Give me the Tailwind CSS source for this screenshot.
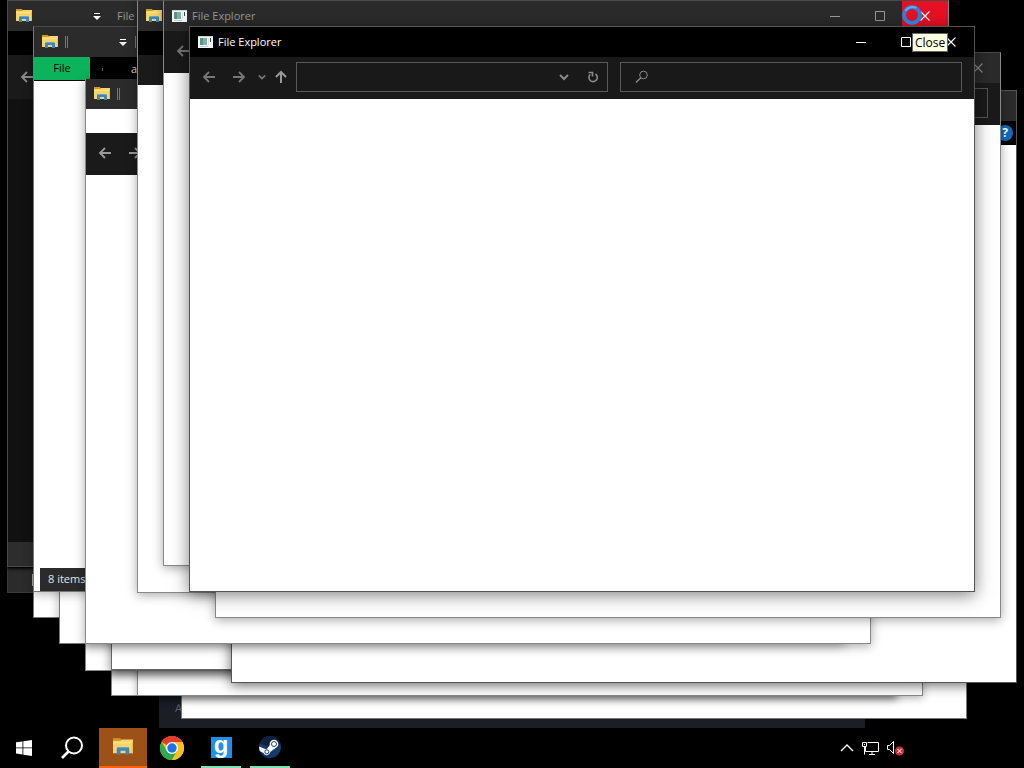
<!DOCTYPE html>
<html lang="en">
<head>
  <meta charset="UTF-8">
  <title>Desktop</title>
  <meta name="viewport" content="width=device-width, initial-scale=1.0">
  <script src="https://cdn.jsdelivr.net/npm/@tailwindcss/browser@4"></script>
</head>
<body class="h-screen flex flex-col bg-black overflow-hidden select-none text-[11px] font-['Open_Sans','Noto_Sans',sans-serif]">

  <!-- shared icons -->
  <svg class="hidden">
    <symbol id="folder" viewBox="0 0 18 16">
      <path d="M1 1h6l1 2H1z" fill="#d99a1c"/>
      <path d="M1 3h6l1-1h9v11H1z" fill="#f9d468"/>
      <path d="M1 4h16v1H1z" fill="#ffe28c"/>
      <path d="M16 4h1v9h-1z" fill="#efc04a"/>
      <path d="M4 14V9.500Q4 8 5.500 8h7Q14 8 14 9.500V14h-3v-3H7v3z" fill="#3d86bd"/>
      <path d="M5 8h8v1H5z" fill="#62a5d2"/>
    </symbol>
    <symbol id="app" viewBox="0 0 15 12">
      <path d="M0 0h15v12H0z" fill="#f2f5f5"/>
      <path d="M0 0h15v1H0z" fill="#c9d2d4"/>
      <path d="M2 2h7v7H2z" fill="#7fb0a6"/>
      <path d="M2 2h3v7H2z" fill="#5b9188"/>
      <path d="M10 2h1v7h-1z" fill="#dbe4e8"/>
      <path d="M12 2h1v4h-1z" fill="#3c464c"/>
      <path d="M2 10h8v1H2z" fill="#c3ccd0"/>
    </symbol>
    <symbol id="left" viewBox="0 0 14 14">
      <path d="M13 7H2M7 2L2 7l5 5" fill="none" stroke="currentColor" stroke-width="1.800"/>
    </symbol>
    <symbol id="right" viewBox="0 0 14 14">
      <path d="M1 7h11M7 2l5 5-5 5" fill="none" stroke="currentColor" stroke-width="1.800"/>
    </symbol>
    <symbol id="up" viewBox="0 0 14 14">
      <path d="M7 13V2M2 7l5-5 5 5" fill="none" stroke="currentColor" stroke-width="2"/>
    </symbol>
    <symbol id="chevron" viewBox="0 0 10 10">
      <path d="M1 3l4 4 4-4" fill="none" stroke="currentColor" stroke-width="2"/>
    </symbol>
    <symbol id="customize" viewBox="0 0 8 8">
      <path d="M1 1h6v1H1zM0 4h8L4 8z" fill="currentColor"/>
    </symbol>
    <symbol id="min" viewBox="0 0 10 10"><path d="M0 5.500h10" stroke="currentColor"/></symbol>
    <symbol id="max" viewBox="0 0 10 10"><path d="M.5.5h9v9h-9z" fill="none" stroke="currentColor"/></symbol>
    <symbol id="close" viewBox="0 0 10 10"><path d="M.5.5l9 9M9.500.5l-9 9" stroke="currentColor" stroke-width="1.200"/></symbol>
  </svg>

  <main class="relative flex-1">

    <!-- Steam, behind everything -->
    <section class="absolute left-[159px] top-[163px] w-[706px] h-[565px] bg-[#1b1e26] flex items-end px-4 py-3 text-[#5c5f66]">ADD A GAME</section>

    <!-- blank explorer windows -->
    <section class="absolute left-[181px] top-[154px] w-[786px] h-[565px] bg-white border border-[#777]"></section>
    <section class="absolute left-[111px] top-[131px] w-[786px] h-[565px] bg-white border border-[#888] shadow-[0_3px_8px_rgba(0,0,0,0.5)]"></section>
    <section class="absolute left-[137px] top-[131px] w-[786px] h-[565px] bg-white border border-[#888] shadow-[0_2px_8px_rgba(0,0,0,0.3)]"></section>
    <section class="absolute left-[85px] top-[105px] w-[786px] h-[566px] bg-white border border-[#888] shadow-[0_3px_10px_rgba(0,0,0,0.5)]"></section>
    <section class="absolute left-[111px] top-[105px] w-[786px] h-[565px] bg-white border border-[#666] shadow-[0_3px_10px_rgba(0,0,0,0.5)]"></section>

    <section class="absolute left-[231px] top-[90px] w-[786px] h-[593px] bg-white border border-[#555] shadow-[0_2px_12px_rgba(0,0,0,0.6)]">
      <header class="h-[30px] bg-[#2b2b2b]"></header>
      <div class="h-6 bg-black flex items-center justify-end px-[3px]">
        <button aria-label="Help" class="size-4 rounded-full bg-[#0f6cbd] text-white text-xs font-bold leading-4 text-center">?</button>
      </div>
    </section>

    <!-- dark windows on the left -->
    <section class="absolute left-[7px] top-[27px] w-[786px] h-[566px] bg-[#111] border border-[#3a3a3a] flex flex-col justify-end">
      <footer class="h-6 bg-[#2b2b2b] flex items-center px-6"><span class="w-px h-3 bg-[#aaa]"></span></footer>
    </section>
    <section class="absolute left-[7px] top-0 w-[786px] h-[567px] bg-[#111] border border-[#4a4a4a] shadow-[0_2px_3px_rgba(0,0,0,0.9)] flex flex-col">
      <header class="h-[30px] shrink-0 bg-[#2b2b2b] flex items-center px-[7px] text-[#9a9a9a]">
        <svg class="w-[18px] h-4"><use href="#folder"/></svg>
        <button aria-label="Customize toolbar" class="ml-[58px] w-3 flex justify-center text-white"><svg class="size-2"><use href="#customize"/></svg></button>
        <span class="ml-3.5">File Explorer</span>
      </header>
      <div class="h-6 shrink-0 bg-black"></div>
      <nav class="h-[44px] shrink-0 bg-[#1a1a1a] flex items-center px-3 text-[#8a8a8a]">
        <button aria-label="Back"><svg class="size-[14px]"><use href="#left"/></svg></button>
      </nav>
      <div class="flex-1"></div>
      <footer class="h-6 shrink-0 bg-[#2d2d2d]"></footer>
    </section>

    <section class="absolute left-[33px] top-[53px] w-[786px] h-[565px] bg-white border border-[#777]"></section>
    <section class="absolute left-[59px] top-[79px] w-[786px] h-[565px] bg-white border border-[#777] shadow-[0_2px_10px_rgba(0,0,0,0.3)]"></section>

    <section class="absolute left-[33px] top-[26px] w-[786px] h-[566px] bg-white border border-[#777] border-t-[#4a4a4a] shadow-[0_2px_10px_rgba(0,0,0,0.3)] flex flex-col">
      <header class="h-[30px] shrink-0 bg-[#2b2b2b] flex items-center px-[7px] text-white">
        <svg class="w-[18px] h-4"><use href="#folder"/></svg>
        <span class="ml-1.5 w-[3px] h-3 border-x border-[#777]"></span>
        <button aria-label="Customize toolbar" class="ml-[49px] w-3 flex justify-center"><svg class="size-2"><use href="#customize"/></svg></button>
        <span class="ml-1.5 w-[3px] h-3 border-x border-[#777]"></span>
      </header>
      <div class="h-6 shrink-0 bg-black flex items-center text-[#ddd]">
        <button class="w-14 h-full bg-[#0bb35b] border-b border-black text-black">File</button>
        <span class="ml-3 w-px h-[3px] bg-[#666]"></span>
        <span class="ml-7">a</span>
      </div>
      <div class="flex-1"></div>
      <footer class="ml-1.5 h-[23px] shrink-0 bg-[#2b2b2b] flex items-center px-2 text-[#e4e4e4]">8 items</footer>
    </section>

    <section class="absolute left-[85px] top-[79px] w-[786px] h-[565px] bg-white border-x border-b border-[#888] shadow-[0_2px_10px_rgba(0,0,0,0.35)] flex flex-col">
      <header class="h-[30px] shrink-0 bg-[#2b2b2b] flex items-center px-[7px]">
        <svg class="w-[18px] h-4"><use href="#folder"/></svg>
        <span class="ml-1.5 w-[3px] h-3 border-x border-[#777]"></span>
      </header>
      <div class="h-6 shrink-0"></div>
      <nav class="h-[42px] shrink-0 bg-[#1a1a1a] flex items-center gap-4 px-3 pb-0.5 text-[#999]">
        <button aria-label="Back"><svg class="size-[14px]"><use href="#left"/></svg></button>
        <button aria-label="Forward"><svg class="size-[14px]"><use href="#right"/></svg></button>
      </nav>
    </section>

    <section class="absolute left-[137px] top-0 w-[786px] h-[593px] bg-white border border-[#888] border-t-[#4a4a4a] shadow-[0_2px_10px_rgba(0,0,0,0.35)]">
      <header class="h-[30px] bg-[#2b2b2b] flex items-center px-[7px]">
        <svg class="w-[18px] h-4"><use href="#folder"/></svg>
      </header>
      <div class="h-6 bg-black"></div>
      <nav class="h-[30px] bg-[#1a1a1a]"></nav>
    </section>

    <section class="absolute left-[215px] top-[52px] w-[786px] h-[566px] bg-white border border-[#888] border-t-[#4a4a4a] shadow-[0_2px_10px_rgba(0,0,0,0.35)]">
      <header class="h-[30px] bg-[#2b2b2b] flex items-center justify-end px-[17px] text-[#888]">
        <button aria-label="Close"><svg class="size-[10px]"><use href="#close"/></svg></button>
      </header>
      <nav class="h-[42px] bg-[#1a1a1a] flex items-center justify-end px-3 pb-0.5">
        <input aria-label="Search" class="w-[343px] h-[30px] border border-[#555]">
      </nav>
    </section>

    <section class="absolute left-[163px] top-0 w-[786px] h-[566px] bg-white border border-[#888] border-t-[#4a4a4a] shadow-[0_2px_10px_rgba(0,0,0,0.35)]">
      <header class="h-[30px] bg-[#2b2b2b] flex items-center pl-2 text-[#9a9a9a]">
        <svg class="w-[15px] h-3"><use href="#app"/></svg>
        <span class="ml-[5px] flex-1">File Explorer</span>
        <button aria-label="Minimize" class="w-[45px] h-full flex items-center justify-center"><svg class="size-[10px]"><use href="#min"/></svg></button>
        <button aria-label="Maximize" class="w-[45px] h-full flex items-center justify-center"><svg class="size-[10px]"><use href="#max"/></svg></button>
        <button aria-label="Close" class="w-[46px] h-full flex items-center justify-center bg-[#e81123] text-white"><svg class="size-[10px]"><use href="#close"/></svg></button>
      </header>
      <nav class="h-[42px] bg-[#1a1a1a] flex items-center px-3 pb-0.5 text-[#777]">
        <button aria-label="Back"><svg class="size-[14px]"><use href="#left"/></svg></button>
      </nav>
    </section>

    <!-- active window -->
    <section class="absolute left-[189px] top-[26px] w-[786px] h-[566px] bg-white border border-[#555] shadow-[0_3px_16px_rgba(0,0,0,0.5)]">
      <header class="h-[30px] bg-black flex items-center pl-2 text-white">
        <svg class="w-[15px] h-3"><use href="#app"/></svg>
        <h1 class="ml-[5px] flex-1">File Explorer</h1>
        <button aria-label="Minimize" class="w-[45px] h-full flex items-center justify-center"><svg class="size-[10px]"><use href="#min"/></svg></button>
        <button aria-label="Maximize" class="w-[45px] h-full flex items-center justify-center"><svg class="size-[10px]"><use href="#max"/></svg></button>
        <button aria-label="Close" class="w-[46px] h-full flex items-center justify-center"><svg class="size-[10px]"><use href="#close"/></svg></button>
      </header>
      <nav class="h-[42px] bg-[#191919] flex items-center px-3 pb-0.5 text-[#777]">
        <button aria-label="Back"><svg class="size-[14px]"><use href="#left"/></svg></button>
        <button aria-label="Forward" class="ml-4"><svg class="size-[14px]"><use href="#right"/></svg></button>
        <button aria-label="Recent locations" class="ml-3"><svg class="size-2"><use href="#chevron"/></svg></button>
        <button aria-label="Up" class="ml-2 text-[#999]"><svg class="size-[14px]"><use href="#up"/></svg></button>
        <div class="ml-2 w-[312px] h-[30px] border border-[#5a5a5a] flex items-center gap-[18px] pr-2 text-[#8a8a8a]">
          <input aria-label="Address" class="flex-1 min-w-0 h-full px-2 outline-none">
          <button aria-label="Previous locations"><svg class="size-[10px]"><use href="#chevron"/></svg></button>
          <button aria-label="Refresh">
            <svg class="size-3" viewBox="0 0 12 12" fill="none" stroke="currentColor" stroke-width="1.600"><path d="M8.500 3A4.200 4.200 0 1 1 3.300 3.300M1.500 1.500h4v4"/></svg>
          </button>
        </div>
        <label class="ml-3 flex-1 h-[30px] border border-[#5a5a5a] flex items-center px-[14px] text-[#8a8a8a]">
          <svg class="size-[14px]" viewBox="0 0 14 14" fill="none" stroke="currentColor"><circle cx="8.500" cy="5" r="3.800"/><path d="M5.800 7.700L1 12.500" stroke-width="1.400"/></svg>
          <input aria-label="Search" class="flex-1 min-w-0 h-full px-2 outline-none">
        </label>
      </nav>
    </section>

    <!-- busy cursor and tooltip -->
    <svg class="absolute left-[902px] top-[5px] size-5" viewBox="0 0 20 20" fill="none">
      <circle cx="10" cy="10" r="8" stroke="#2b7fdc" stroke-width="4"/>
      <path d="M3.500 6a8 8 0 0 1 11-3" stroke="#58adf5" stroke-width="2"/>
    </svg>
    <div role="tooltip" class="absolute left-[912px] top-[33px] h-[19px] px-0.5 bg-[#ffffe1] border border-[#666] text-black text-xs leading-[17px]">Close</div>
  </main>

  <footer class="relative h-10 bg-black flex items-center text-white">
    <button aria-label="Start" class="w-12 h-full flex items-center justify-center">
      <svg class="size-4" viewBox="0 0 16 16" fill="currentColor"><path d="M0 2.300L6.500 1.400v6.100H0zM7.300 1.300L16 0v7.500H7.300zM0 8.300h6.500v6.200L0 13.600zM7.300 8.300H16V16l-8.700-1.300z"/></svg>
    </button>
    <button aria-label="Search" class="w-12 h-full flex items-center justify-center">
      <svg class="size-6" viewBox="0 0 24 24" fill="none" stroke="currentColor" stroke-width="2"><circle cx="14" cy="9.500" r="8"/><path d="M8.500 15.500L2 22" stroke-width="2.600"/></svg>
    </button>
    <button aria-label="File Explorer" class="ml-[3px] w-12 h-full flex items-center justify-center bg-[#9c5118] border-b-2 border-[#f7630c]">
      <svg class="w-6 h-5"><use href="#folder"/></svg>
    </button>
    <button aria-label="Google Chrome" class="w-[49px] h-full flex items-center justify-center">
      <svg class="size-6" viewBox="0 0 24 24">
        <circle cx="12" cy="12" r="12" fill="#fbc116"/>
        <path d="M12 12L1.600 6A12 12 0 0 1 22.400 6z" fill="#e33b2e"/>
        <path d="M1.600 6A12 12 0 0 0 12 24l5.200-9L12 12 6.800 15z" fill="#2da94f"/>
        <path d="M12 6h10.400a12 12 0 0 1-10.400 18l5.200-9z" fill="#fbc116"/>
        <circle cx="12" cy="12" r="6" fill="#fff"/>
        <circle cx="12" cy="12" r="4.700" fill="#1a73e8"/>
      </svg>
    </button>
    <button aria-label="G" class="ml-[5px] w-10 h-full flex items-center justify-center border-b-2 border-[#7fe0b0]">
      <span class="w-[21px] h-[21px] bg-[#1e90e6] font-['Liberation_Sans',sans-serif] font-bold text-[24px] leading-[16px]">g</span>
    </button>
    <button aria-label="Steam" class="ml-[9px] w-10 h-full flex items-center justify-center border-b-2 border-[#7fe0b0]">
      <svg class="size-[22px]" viewBox="0 0 22 22">
        <circle cx="11" cy="11" r="11" fill="#153b6e"/>
        <path d="M.6 7.500A11 11 0 0 1 21.400 7.500L11 11z" fill="#11203f"/>
        <path d="M0 10.500l7.500 3 4-5.500 5 4-5.300 4A3.500 3.500 0 0 1 4.500 17L.7 15z" fill="#fff"/>
        <circle cx="15" cy="8" r="4.300" fill="#fff"/>
        <circle cx="15" cy="8" r="2.500" fill="none" stroke="#24436d"/>
        <circle cx="7.800" cy="15.800" r="2" fill="none" stroke="#24436d"/>
      </svg>
    </button>

    <div class="ml-auto mr-[120px] flex items-center gap-2">
      <button aria-label="Show hidden icons"><svg class="w-[14px] h-4" viewBox="0 0 14 16" fill="none" stroke="currentColor" stroke-width="1.400"><path d="M1 11l6-6 6 6"/></svg></button>
      <button aria-label="Network"><svg class="w-[17px] h-4" viewBox="0 0 17 16" fill="none" stroke="currentColor"><path d="M5.500 2.500h11v9h-13v-5M.5 2.500h4v4h-4zM2.500 4v1M2.500 6.500v8M7 14.500h6M10 11.500v3"/></svg></button>
      <button aria-label="Volume muted"><svg class="w-[17px] h-4" viewBox="0 0 17 16" fill="none" stroke="currentColor"><path d="M.5 5.500h2l4-4v12l-4-4h-2z"/><circle cx="12.500" cy="11" r="4.500" fill="#c9303c" stroke="none"/><path d="M10.500 9l4 4M14.500 9l-4 4"/></svg></button>
    </div>
  </footer>

</body>
</html>
